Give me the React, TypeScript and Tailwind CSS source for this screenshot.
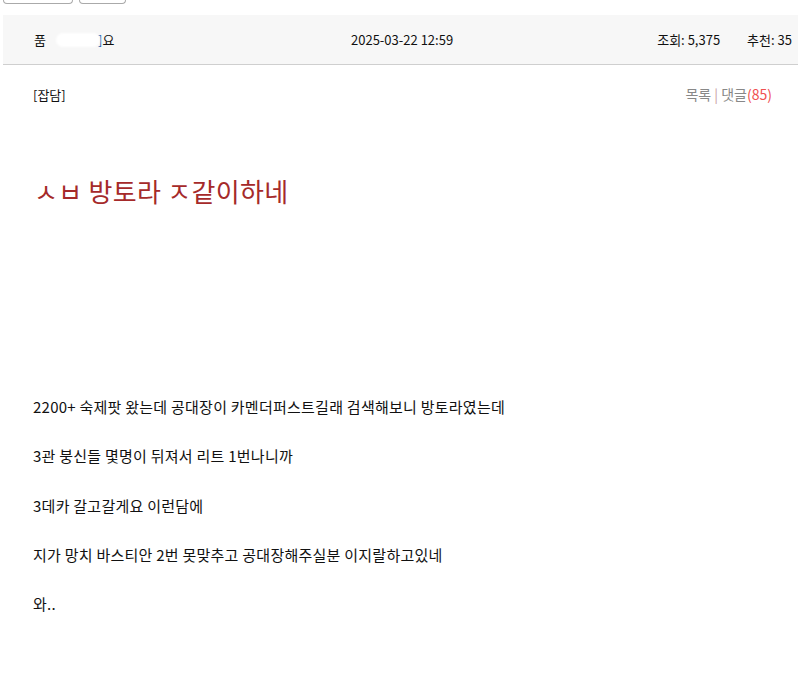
import React from 'react';

const font = { fontFamily: '"Noto Sans CJK KR", "Noto Sans", sans-serif' };

const lines = [
    '2200+ 숙제팟 왔는데 공대장이 카멘더퍼스트길래 검색해보니 방토라였는데',
    '3관 붕신들 몇명이 뒤져서 리트 1번나니까',
    '3데카 갈고갈게요 이런담에',
    '지가 망치 바스티안 2번 못맞추고 공대장해주실분 이지랄하고있네',
    '와..',
];

const App: React.FC = () => {
    return (
        <div className="w-[798px] h-[689px] bg-white overflow-hidden text-[#111]" style={font}>
            <div className="flex gap-[6px] pl-[3px] h-[15px] items-start">
                <div className="w-[70px] h-[4px] border border-t-0 border-[#aaa] rounded-b-[4px]" />
                <div className="w-[47px] h-[4px] border border-t-0 border-[#aaa] rounded-b-[4px]" />
            </div>

            <div className="ml-[3px] h-[50px] bg-[#f7f7f7] border-b border-[#cfcfcf] flex items-center text-[13px] pl-[31px] pr-[6px]">
                <div className="w-[317px] flex items-center">
                    <span>품</span>
                    <span className="inline-block ml-[10px] w-[44px] h-[14px] bg-white rounded-full blur-[1px]" />
                    <span className="text-[#2a5fa8] -ml-[2px]">]</span>
                    <span>요</span>
                </div>
                <div>2025-03-22 12:59</div>
                <div className="flex-1 flex justify-end items-center gap-[27px]">
                    <span>조회: 5,375</span>
                    <span>추천: 35</span>
                </div>
            </div>

            <div className="flex items-center justify-between pl-[33px] pr-[26px] pt-[19px] text-[13px]">
                <span>[잡담]</span>
                <span className="text-[#888] text-[14px]">
                    목록 <span className="text-[#c8a0a0]">|</span> 댓글<span className="text-[#f05050]">(85)</span>
                </span>
            </div>

            <h1 className="pl-[34px] pt-[69px] text-[26px] leading-[34px] tracking-[0.3px] text-[#a52a2a]">ㅅㅂ 방토라 ㅈ같이하네</h1>

            <div className="pl-[33px] pt-[189px] flex flex-col gap-[29.3px] text-[15px] leading-[20px] tracking-[0.25px]">
                {lines.map((l, i) => (
                    <p key={i}>{l}</p>
                ))}
            </div>
        </div>
    );
};

export default App;
